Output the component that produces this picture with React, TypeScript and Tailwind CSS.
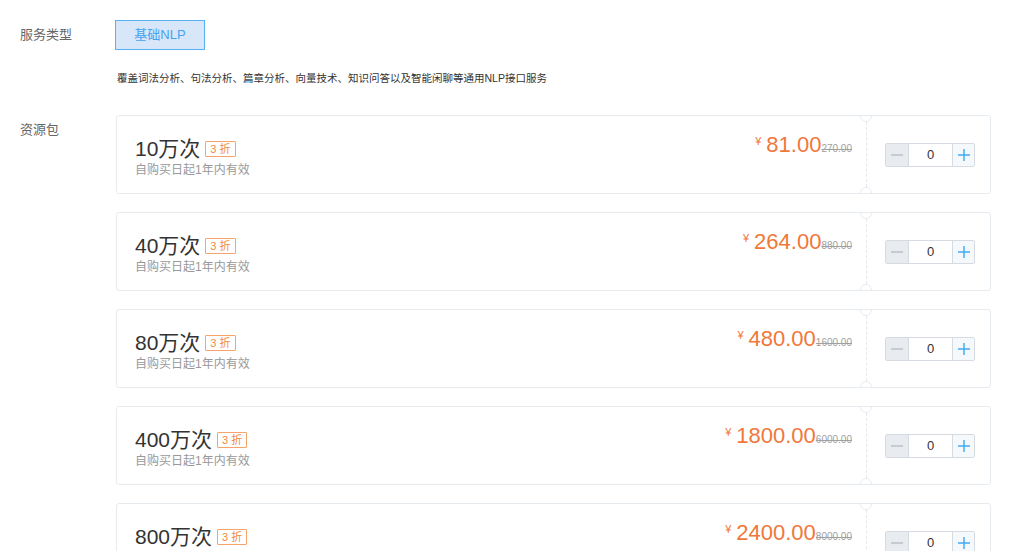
import React from "react";

const packages = [
  { name: "10万次", price: "81.00", original: "270.00" },
  { name: "40万次", price: "264.00", original: "880.00" },
  { name: "80万次", price: "480.00", original: "1600.00" },
  { name: "400万次", price: "1800.00", original: "6000.00" },
  { name: "800万次", price: "2400.00", original: "8000.00" },
];

function Stepper() {
  return (
    <div className="flex h-[24px] border border-[#d6dbe1] rounded-[2px] overflow-hidden">
      <button className="w-[23px] h-full bg-[#e8ecf0] flex items-center justify-center border-r border-[#d6dbe1]">
        <svg width="12" height="12" viewBox="0 0 12 12">
          <path d="M0 6H12" stroke="#b9c0c8" strokeWidth="1.5" />
        </svg>
      </button>
      <div className="w-[43px] h-full bg-white flex items-center justify-center text-[13px] text-[#333]">
        0
      </div>
      <button className="w-[22px] h-full bg-[#f6f9fc] flex items-center justify-center border-l border-[#d6dbe1]">
        <svg width="12" height="12" viewBox="0 0 12 12">
          <path d="M0 6H12M6 0V12" stroke="#42acf5" strokeWidth="1.5" />
        </svg>
      </button>
    </div>
  );
}

function PackageCard({
  name,
  price,
  original,
}: {
  name: string;
  price: string;
  original: string;
}) {
  return (
    <div className="flex h-[79px] w-[875px] mb-[18px] border border-[#e6ebf0] rounded-[3px] bg-white overflow-hidden">
      <div className="flex-1 flex justify-between pl-[18px] pr-[14px]">
        <div className="pt-[20px]">
          <div className="flex items-center">
            <span className="text-[21px] leading-[26px] text-[#333]">
              {name}
            </span>
            <span className="ml-[5px] h-[16px] px-[4px] border border-[#f6a469] text-[#f28a45] text-[11px] leading-[14px] rounded-[1px]">
              3 折
            </span>
          </div>
          <div className="text-[12px] leading-[16px] text-[#999]">
            自购买日起1年内有效
          </div>
        </div>
        <div className="pt-[16px] flex items-baseline">
          <span className="self-start text-[11px] leading-[14px] text-[#f0783a] mt-[2px] mr-[5px]">
            ¥
          </span>
          <span className="text-[22px] leading-[26px] text-[#f0783a]">
            {price}
          </span>
          <span className="text-[10px] text-[#a0a0a0] line-through">
            {original}
          </span>
        </div>
      </div>
      <div className="relative w-[124px] flex items-center justify-center pl-[4px]">
        <div className="absolute left-0 top-[6px] bottom-[6px] border-l border-dashed border-[#e3e8ee]" />
        <div className="absolute -left-[6px] -top-[6px] w-[12px] h-[12px] rounded-full bg-white border border-[#e6ebf0]" />
        <div className="absolute -left-[6px] -bottom-[6px] w-[12px] h-[12px] rounded-full bg-white border border-[#e6ebf0]" />
        <Stepper />
      </div>
    </div>
  );
}

export default function App() {
  return (
    <div
      className="bg-white min-h-screen pt-[20px]"
      style={{ fontFamily: '"Liberation Sans", "Noto Sans CJK SC", sans-serif' }}
    >
      <div className="flex">
        <div className="w-[115px] pl-[20px] text-[13px] leading-[30px] text-[#666]">
          服务类型
        </div>
        <button className="w-[90px] h-[30px] bg-[#d7e6f8] border border-[#55b0f5] text-[#45a2f0] text-[13px]">
          基础NLP
        </button>
      </div>
      <div className="ml-[117px] mt-[20px] text-[10.5px] leading-[16px] text-[#333]">
        覆盖词法分析、句法分析、篇章分析、向量技术、知识问答以及智能闲聊等通用NLP接口服务
      </div>
      <div className="flex mt-[29px]">
        <div className="w-[116px] pl-[20px] pt-[6px] text-[13px] leading-[18px] text-[#666]">
          资源包
        </div>
        <div>
          {packages.map((p) => (
            <PackageCard key={p.name} {...p} />
          ))}
        </div>
      </div>
    </div>
  );
}
